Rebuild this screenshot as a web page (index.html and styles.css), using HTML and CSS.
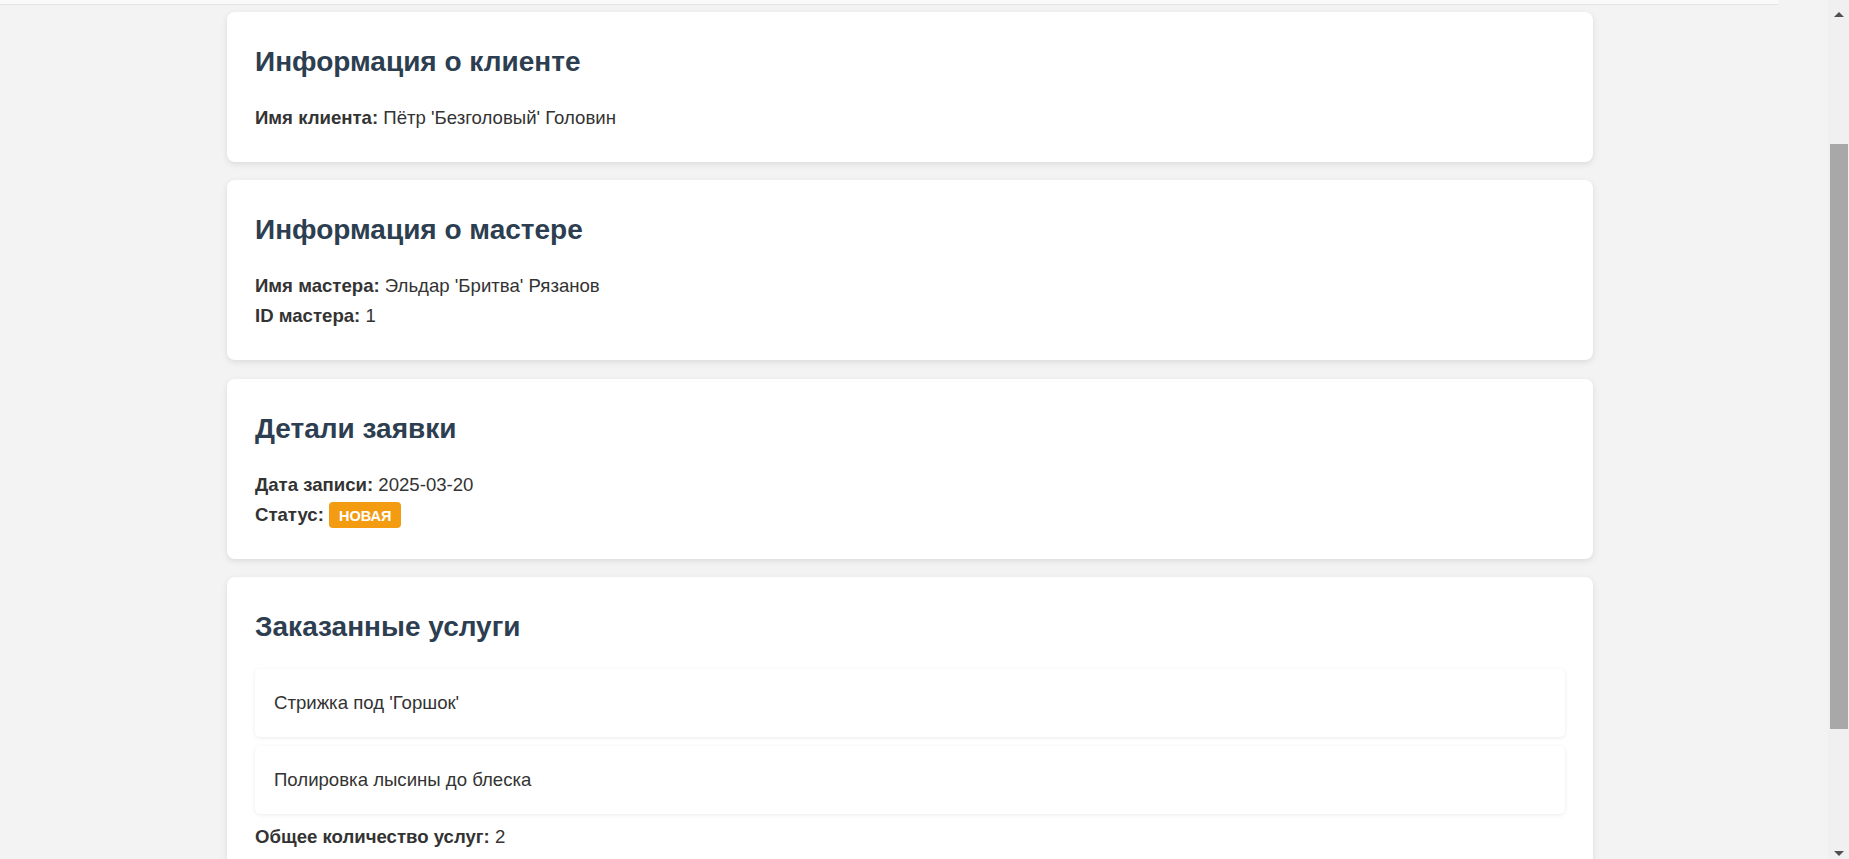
FILE: index.html
```html
<!DOCTYPE html>
<html lang="ru">
<head>
<meta charset="utf-8">
<title>Заявка</title>
<link rel="stylesheet" href="styles.css">
</head>
<body>
<div class="viewport">
  <div class="page">
    <div class="topbar"></div>
    <main class="container">
      <section class="card">
        <h2>Информация о клиенте</h2>
        <div class="info">
          <p><strong>Имя клиента:</strong> Пётр 'Безголовый' Головин</p>
        </div>
      </section>
      <section class="card">
        <h2>Информация о мастере</h2>
        <div class="info">
          <p><strong>Имя мастера:</strong> Эльдар 'Бритва' Рязанов</p>
          <p><strong>ID мастера:</strong> 1</p>
        </div>
      </section>
      <section class="card">
        <h2>Детали заявки</h2>
        <div class="info">
          <p><strong>Дата записи:</strong> 2025-03-20</p>
          <p><strong>Статус:</strong> <span class="badge">Новая</span></p>
        </div>
      </section>
      <section class="card">
        <h2>Заказанные услуги</h2>
        <ul class="services">
          <li class="service">Стрижка под 'Горшок'</li>
          <li class="service">Полировка лысины до блеска</li>
        </ul>
        <p class="total"><strong>Общее количество услуг:</strong> 2</p>
      </section>
    </main>
  </div>
  <div class="scrollbar">
    <span class="arrow arrow-up"></span>
    <div class="track"><div class="thumb"></div></div>
    <span class="arrow arrow-down"></span>
  </div>
</div>
</body>
</html>
```

FILE: styles.css
```css
html, body {
  margin: 0;
  padding: 0;
  height: 859px;
  overflow: hidden;
}

body {
  background: #f3f3f3;
  font-family: "Liberation Sans", Arial, sans-serif;
  font-size: 18.6px;
  color: #333;
}

.viewport {
  display: flex;
  height: 859px;
}

.page {
  width: 1828px;
  flex: none;
  overflow: hidden;
}

.topbar {
  width: 1778px;
  height: 4px;
  background: #fafafa;
  border-bottom: 1px solid #e3e3e3;
}

.container {
  width: 1366px;
  margin: 7px 0 0 227px;
  display: flex;
  flex-direction: column;
  gap: 18.5px;
}

.card {
  background: #fff;
  border-radius: 8px;
  box-shadow: 0 2px 6px rgba(0, 0, 0, 0.1);
  padding: 24px 28px 23px;
}

.card h2 {
  margin: 10px 0 26px;
  font-size: 28px;
  line-height: 32px;
  font-weight: bold;
  color: #2c3e50;
}

.info {
  display: flex;
  flex-direction: column;
  gap: 9.5px;
  padding: 4px 0 10px;
}

.info p {
  margin: 0;
  line-height: 20.7px;
}

.info strong,
.total strong {
  color: #333;
}

.badge {
  background: #f39c12;
  color: #fff;
  font-weight: bold;
  font-size: 14.5px;
  line-height: 0;
  text-transform: uppercase;
  padding: 6px 10px 4px;
  border-radius: 4px;
}

.services {
  list-style: none;
  margin: 0;
  padding: 0;
  display: flex;
  flex-direction: column;
  gap: 9.3px;
}

.service {
  background: #fff;
  border-radius: 5px;
  box-shadow: 0 1px 4px rgba(0, 0, 0, 0.08);
  padding: 23.5px 19px;
  line-height: 20.7px;
}

.total {
  margin: 13px 0 10px;
  line-height: 20.7px;
}

.scrollbar {
  width: 21px;
  flex: none;
  background: #f0f0f0;
  display: flex;
  flex-direction: column;
  align-items: center;
}

.arrow {
  display: block;
  width: 0;
  height: 0;
  border-left: 5px solid transparent;
  border-right: 5px solid transparent;
  margin-left: 1px;
}

.arrow-up {
  border-bottom: 5px solid #505050;
  margin-top: 12px;
}

.arrow-down {
  border-top: 5px solid #505050;
  margin-bottom: 3px;
}

.track {
  flex: 1;
  width: 100%;
  position: relative;
}

.thumb {
  position: absolute;
  left: 2px;
  top: 127px;
  width: 18px;
  height: 585px;
  background: #a8a8a8;
}
```
